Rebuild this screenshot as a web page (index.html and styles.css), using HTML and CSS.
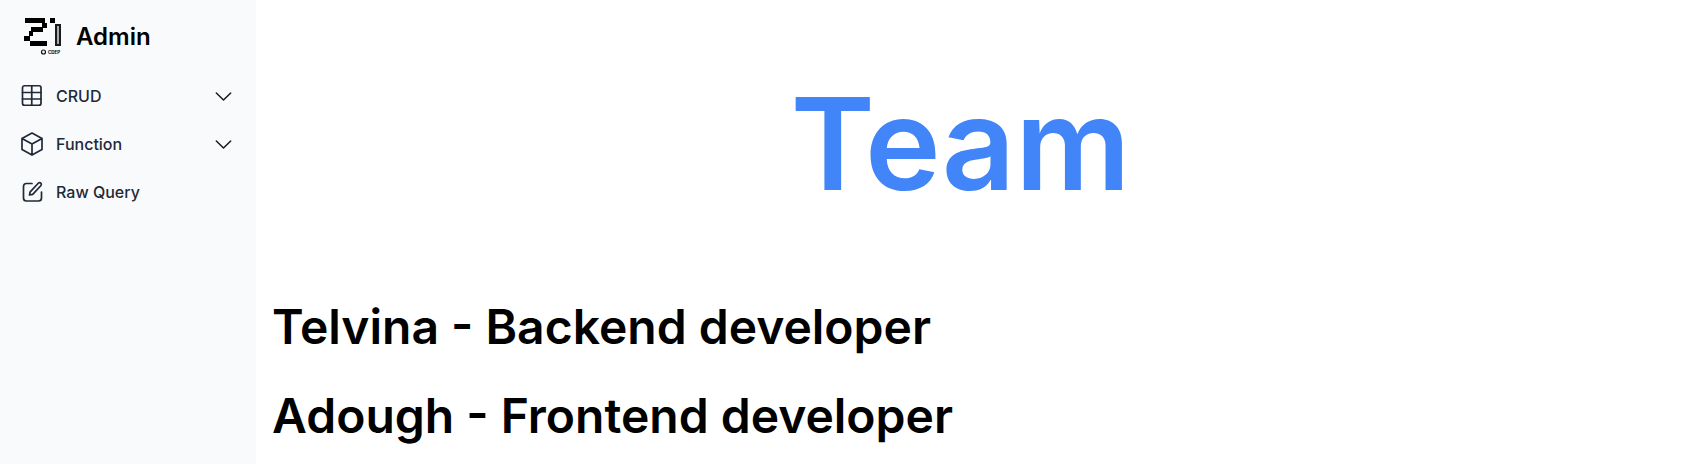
FILE: index.html
```html
<!DOCTYPE html>
<html lang="en">
<head>
    <meta charset="UTF-8">
    <meta name="viewport" content="width=device-width, initial-scale=1.0">
    <title>Team</title>
    <link rel="stylesheet" href="styles.css">
</head>
<body>
    <div class="layout">
        <aside class="sidebar">
            <div class="brand">
                <svg class="brand-logo" viewBox="0 0 38 40" width="38" height="40">
                    <rect x="1" y="2" width="20" height="5" fill="#000"/>
                    <rect x="18" y="7" width="5" height="5" fill="#000"/>
                    <rect x="7" y="11" width="12" height="5" fill="#000"/>
                    <rect x="5" y="15" width="4" height="5" fill="#000"/>
                    <rect x="0" y="20" width="6" height="5" fill="#000"/>
                    <rect x="6" y="25" width="17" height="5" fill="#000"/>
                    <rect x="26" y="2" width="5" height="5" fill="#000"/>
                    <rect x="31" y="8" width="6" height="22" fill="#1a1a1a"/>
                    <rect x="33" y="10" width="2" height="18" fill="#aaa"/>
                    <circle cx="19.500" cy="36" r="2" fill="none" stroke="#111" stroke-width="1.200"/>
                    <text x="24" y="38" class="brand-mark">CDEP</text>
                </svg>
                <span class="brand-name">Admin</span>
            </div>
            <ul class="menu">
                <li class="menu-item">
                    <svg class="menu-icon" viewBox="0 0 24 24"><rect x="2.500" y="1.750" width="18.500" height="19.500" rx="2"/><path d="M11.750 1.750v19.500M2.500 8.500h18.500M2.500 15h18.500"/></svg>
                    <span class="menu-label">CRUD</span>
                    <svg class="menu-arrow" viewBox="0 0 24 24"><path d="m19.500 8.250-7.500 7.500-7.500-7.500"/></svg>
                </li>
                <li class="menu-item">
                    <svg class="menu-icon" viewBox="0 0 24 24"><path d="m22 6.500-10-5.500-10 5.500m20 0-10 5.500m10-5.500v11l-10 5.500M2 6.500l10 5.500M2 6.500v11l10 5.500m0-11v11"/></svg>
                    <span class="menu-label">Function</span>
                    <svg class="menu-arrow" viewBox="0 0 24 24"><path d="m19.500 8.250-7.500 7.500-7.500-7.500"/></svg>
                </li>
                <li class="menu-item">
                    <svg class="menu-icon" viewBox="0 0 24 24"><path d="M12 3.500H6.500a3 3 0 0 0-3 3V18a3 3 0 0 0 3 3h12a3 3 0 0 0 3-3v-6"/><path d="M9.500 15l.7-3.200 8.300-8.800a1.800 1.800 0 0 1 2.500 2.500l-8.300 8.800z"/></svg>
                    <span class="menu-label">Raw Query</span>
                </li>
            </ul>
        </aside>
        <main class="content">
            <h1 class="page-title">Team</h1>
            <h2 class="member">Telvina - Backend developer</h2>
            <h2 class="member">Adough - Frontend developer</h2>
        </main>
    </div>
</body>
</html>
```

FILE: styles.css
```css
* {
    box-sizing: border-box;
}
body {
    margin: 0;
    font-family: Inter, "Liberation Sans", sans-serif;
    background-color: #fff;
    color: #000;
}
.layout {
    display: flex;
    height: 464px;
    overflow: hidden;
}
.sidebar {
    width: 256px;
    flex-shrink: 0;
    background-color: #f9fafb;
    padding: 16px 20px;
}
.brand {
    display: flex;
    align-items: center;
    gap: 14px;
    height: 40px;
    padding-left: 4px;
    margin-bottom: 16px;
}
.brand-logo {
    display: block;
    flex-shrink: 0;
}
.brand-mark {
    font-size: 4.500px;
    font-weight: 700;
}
.brand-name {
    font-size: 24px;
    font-weight: 600;
    color: #000;
}
.menu {
    list-style: none;
    margin: 0;
    padding: 0;
}
.menu-item {
    display: flex;
    align-items: center;
    height: 48px;
    gap: 12px;
    font-size: 16px;
    font-weight: 500;
    color: #1f2937;
}
.menu-icon {
    width: 24px;
    height: 24px;
    flex-shrink: 0;
    fill: none;
    stroke: #1f2937;
    stroke-width: 1.700;
    stroke-linecap: round;
    stroke-linejoin: round;
}
.menu-label {
    flex: 1;
}
.menu-arrow {
    width: 23px;
    height: 23px;
    margin-right: 1px;
    fill: none;
    stroke: #111827;
    stroke-width: 1.500;
    stroke-linecap: round;
    stroke-linejoin: round;
}
.content {
    flex: 1;
    padding: 0 55px 0 16px;
}
.page-title {
    margin: 80px 0 95px;
    font-size: 128px;
    line-height: 1;
    font-weight: 600;
    text-align: center;
    color: #4285f8;
}
.member {
    margin: 0 0 41px;
    font-size: 48px;
    line-height: 48px;
    font-weight: 600;
}
```
